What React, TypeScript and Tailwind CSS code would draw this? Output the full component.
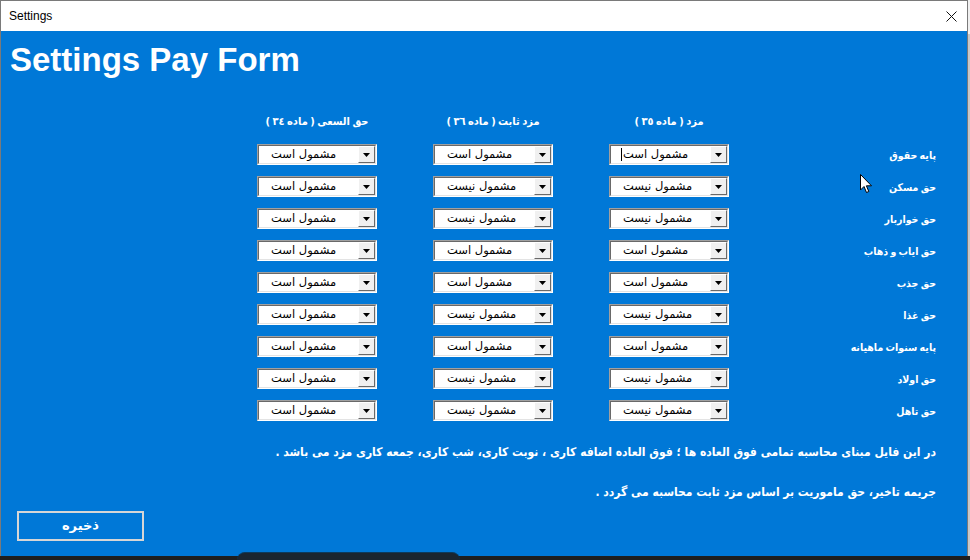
import React from "react";

const IS = "مشمول است";
const NOT = "مشمول نیست";

const rows: [string, [number, number, number]][] = [
  ["پایه حقوق", [1, 1, 1]],
  ["حق مسکن", [1, 0, 0]],
  ["حق خواربار", [1, 0, 0]],
  ["حق ایاب و ذهاب", [1, 1, 1]],
  ["حق جذب", [1, 1, 1]],
  ["حق غذا", [1, 0, 0]],
  ["پایه سنوات ماهیانه", [1, 1, 1]],
  ["حق اولاد", [1, 0, 0]],
  ["حق تاهل", [1, 0, 0]],
];

const fa = { fontFamily: '"DejaVu Sans", sans-serif' };
const faC = { fontFamily: '"DejaVu Sans Condensed", "DejaVu Sans", sans-serif' };

function Combo({ v, caret }: { v: number; caret?: boolean }) {
  return (
    <div className="w-[120px] h-[21px] border border-t-[#a0a0a0] border-l-[#a0a0a0] border-r-white border-b-white">
      <div className="w-full h-full border border-t-[#696969] border-l-[#696969] border-r-[#e3e3e3] border-b-[#e3e3e3] bg-white flex items-center">
        <div className="flex-1 flex items-center pl-[10px] h-full overflow-hidden">
          {caret ? <div className="w-px h-[13px] bg-black" /> : <div className="w-px" />}
          <span dir="rtl" className="ml-[1px] text-[11.5px] leading-[15px] text-black whitespace-nowrap" style={fa}>
            {v ? IS : NOT}
          </span>
        </div>
        <div className="w-[17px] h-[17px] bg-[#f0f0f0] border border-t-white border-l-white border-r-[#696969] border-b-[#696969] flex items-center justify-center">
          <svg width="7" height="4" viewBox="0 0 7 4">
            <path d="M0 0 H7 L3.5 4 Z" fill="#000" />
          </svg>
        </div>
      </div>
    </div>
  );
}

export default function App() {
  return (
    <div className="w-[970px] h-[560px] relative overflow-hidden bg-[#1e1e1e]">
      <div className="flex h-[556px]">
        <div className="w-[968px] h-full flex flex-col border-l border-r border-t border-[#7a7a7a]">
          <div className="h-[30px] bg-white flex items-center justify-between pl-[8px] pr-[8px] shrink-0">
            <span className="text-[12px] text-black" style={{ fontFamily: '"Liberation Sans", sans-serif' }}>
              Settings
            </span>
            <svg width="11" height="11" viewBox="0 0 11 11" className="mr-[2px]">
              <path d="M0.5 0.5 L10.5 10.5 M10.5 0.5 L0.5 10.5" stroke="#111" strokeWidth="1" />
            </svg>
          </div>
          <div className="flex-1 bg-[#0078d7] flex flex-col">
            <div
              className="mt-[10px] pl-[9px] h-[38px] leading-[38px] text-[33px] font-bold text-white"
              style={{ fontFamily: '"Liberation Sans", Arial, sans-serif' }}
            >
              Settings Pay Form
            </div>
            <div className="mt-[35px] pl-[256px] pr-[31px] grid grid-cols-[120px_120px_120px_1fr] gap-x-[56px]" style={faC}>
              <div dir="rtl" className="text-center text-white font-bold text-[11px] leading-[16px] whitespace-nowrap [word-spacing:-1px]">
                حق السعی ( ماده ٣٤ )
              </div>
              <div dir="rtl" className="text-center text-white font-bold text-[11px] leading-[16px] whitespace-nowrap [word-spacing:-1px]">
                مزد ثابت ( ماده ٣٦ )
              </div>
              <div dir="rtl" className="text-center text-white font-bold text-[11px] leading-[16px] whitespace-nowrap [word-spacing:-1px]">
                مزد ( ماده ٣٥ )
              </div>
              <div />
            </div>
            <div className="mt-[14px] pl-[256px] pr-[31px] grid grid-cols-[120px_120px_120px_1fr] gap-x-[56px] gap-y-[11px]">
              {rows.map(([label, vals], i) => (
                <React.Fragment key={label}>
                  <Combo v={vals[0]} />
                  <Combo v={vals[1]} />
                  <Combo v={vals[2]} caret={i === 0} />
                  <div
                    dir="rtl"
                    className="h-[21px] text-white font-bold text-[10.5px] leading-[23px] whitespace-nowrap [word-spacing:-1px]"
                    style={faC}
                  >
                    {label}
                  </div>
                </React.Fragment>
              ))}
            </div>
            <div
              dir="rtl"
              className="mt-[21px] pr-[31px] text-white font-bold text-[12px] leading-[20px] whitespace-nowrap"
              style={faC}
            >
              در این فایل مبنای محاسبه تمامی فوق العاده ها ؛ فوق العاده اضافه کاری ، نوبت کاری، شب کاری، جمعه کاری  مزد می باشد .
            </div>
            <div
              dir="rtl"
              className="mt-[20px] pr-[31px] text-white font-bold text-[12px] leading-[20px] whitespace-nowrap"
              style={faC}
            >
              جریمه تاخیر، حق ماموریت بر اساس مزد ثابت محاسبه می گردد .
            </div>
            <div className="mt-[9px] ml-[16px] w-[127px] h-[30px] border-2 border-[#d6d6d6] flex items-center justify-center">
              <span className="text-white font-bold text-[13px]" style={fa}>
                ذخیره
              </span>
            </div>
          </div>
        </div>
        <div className="flex-1 flex flex-col">
          <div className="h-[34px] bg-[#f0f0f0]" />
          <div className="flex-1 bg-[#c8c8c8]" />
        </div>
      </div>
      <div className="absolute left-[237px] top-[552px] w-[223px] h-[10px] rounded-t-[8px] bg-[#1a2530] border-t border-[#0d3a5c]" />
      <svg className="absolute left-[860px] top-[174px]" width="13" height="20" viewBox="0 0 13 20">
        <path d="M0.5 0.5 L0.5 16 L4 12.5 L6.5 18.5 L8.8 17.5 L6.4 11.8 L11.5 11.8 Z" fill="#fff" stroke="#000" strokeWidth="1" strokeLinejoin="round" />
      </svg>
    </div>
  );
}
